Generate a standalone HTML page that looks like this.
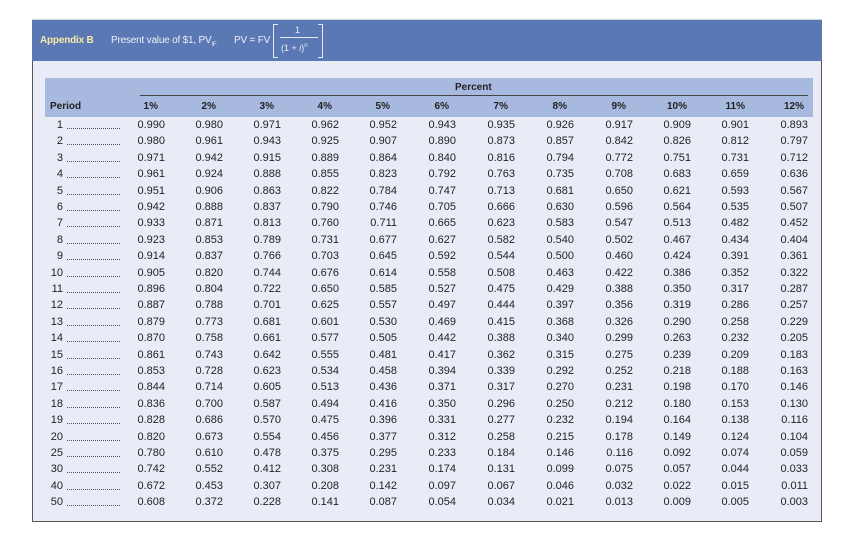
<!DOCTYPE html>
<html><head><meta charset="utf-8"><style>
body{margin:0;width:847px;height:537px;background:#fff;position:relative;font-family:"Liberation Sans",sans-serif;overflow:hidden}
.hdr{position:absolute;left:32px;top:19px;width:790px;height:42px;background:#5a78b4;border-top:1px solid #d0d6e6}
.body{position:absolute;left:32px;top:61px;width:788px;height:460px;background:#e9ecf7;border:1px solid #555;border-top:none}
.band{position:absolute;left:45px;top:78px;width:768px;height:39px;background:#a8b9e0}
.rule{position:absolute;left:140px;top:95px;width:668px;height:1px;background:#444}
.t{position:absolute;font-size:11px;line-height:12px;color:#222;white-space:nowrap}
.b{font-weight:bold;font-size:10px}
.r{text-align:right;width:50px}
.dots{position:absolute;left:67px;width:53px;height:0;border-bottom:1px dotted #555}
.h{color:#eef0f8;font-size:10px;letter-spacing:-0.2px}
</style></head><body>
<div class="hdr"></div>
<div class="body"></div>
<div class="band"></div>
<div class="rule"></div>
<div class="t b" style="left:40px;top:35px;color:#f6eaa6;font-size:10px;letter-spacing:-0.2px">Appendix B</div>
<div class="t h" style="left:111px;top:35px">Present value of $1, PV<sub style="font-size:6px">IF</sub></div>
<div class="t h" style="left:234px;top:35px">PV = FV</div>
<div style="position:absolute;left:273px;top:24px;width:4px;height:32px;border:1px solid #e6e9f3;border-right:none"></div>
<div style="position:absolute;left:318px;top:24px;width:4px;height:32px;border:1px solid #e6e9f3;border-left:none"></div>
<div class="t" style="left:295px;top:24px;color:#eef0f8;font-size:9px">1</div>
<div style="position:absolute;left:280px;top:37px;width:38px;height:1px;background:#e6e9f3"></div>
<div class="t" style="left:281px;top:40px;color:#eef0f8;font-size:9px">(1 + <i>i</i>)<sup style="font-size:6px">n</sup></div>
<div class="t b" style="left:455px;top:82px">Percent</div>
<div class="t b" style="left:50px;top:101px">Period</div>
<div id="x"></div>
<script>
var rights=[165,223,281,339,397,456,515,574,633,691,749,808];
var periods=[1,2,3,4,5,6,7,8,9,10,11,12,13,14,15,16,17,18,19,20,25,30,40,50];
var h='';
for(var c=0;c<12;c++){h+='<div class="t b r" style="left:'+(rights[c]-50-(c<9?7:4))+'px;top:101px">'+(c+1)+'%</div>';}
for(var r=0;r<24;r++){var y=119+r*16.4;var n=periods[r];
h+='<div class="t r" style="left:13px;top:'+y+'px">'+n+'</div><div class="dots" style="top:'+(y+9)+'px"></div>';
for(var c=0;c<12;c++){var v=Math.pow(1+(c+1)/100,-n).toFixed(3);
h+='<div class="t r" style="left:'+(rights[c]-50)+'px;top:'+y+'px">'+v+'</div>';}}
document.getElementById('x').innerHTML=h;
</script>
</body></html>
